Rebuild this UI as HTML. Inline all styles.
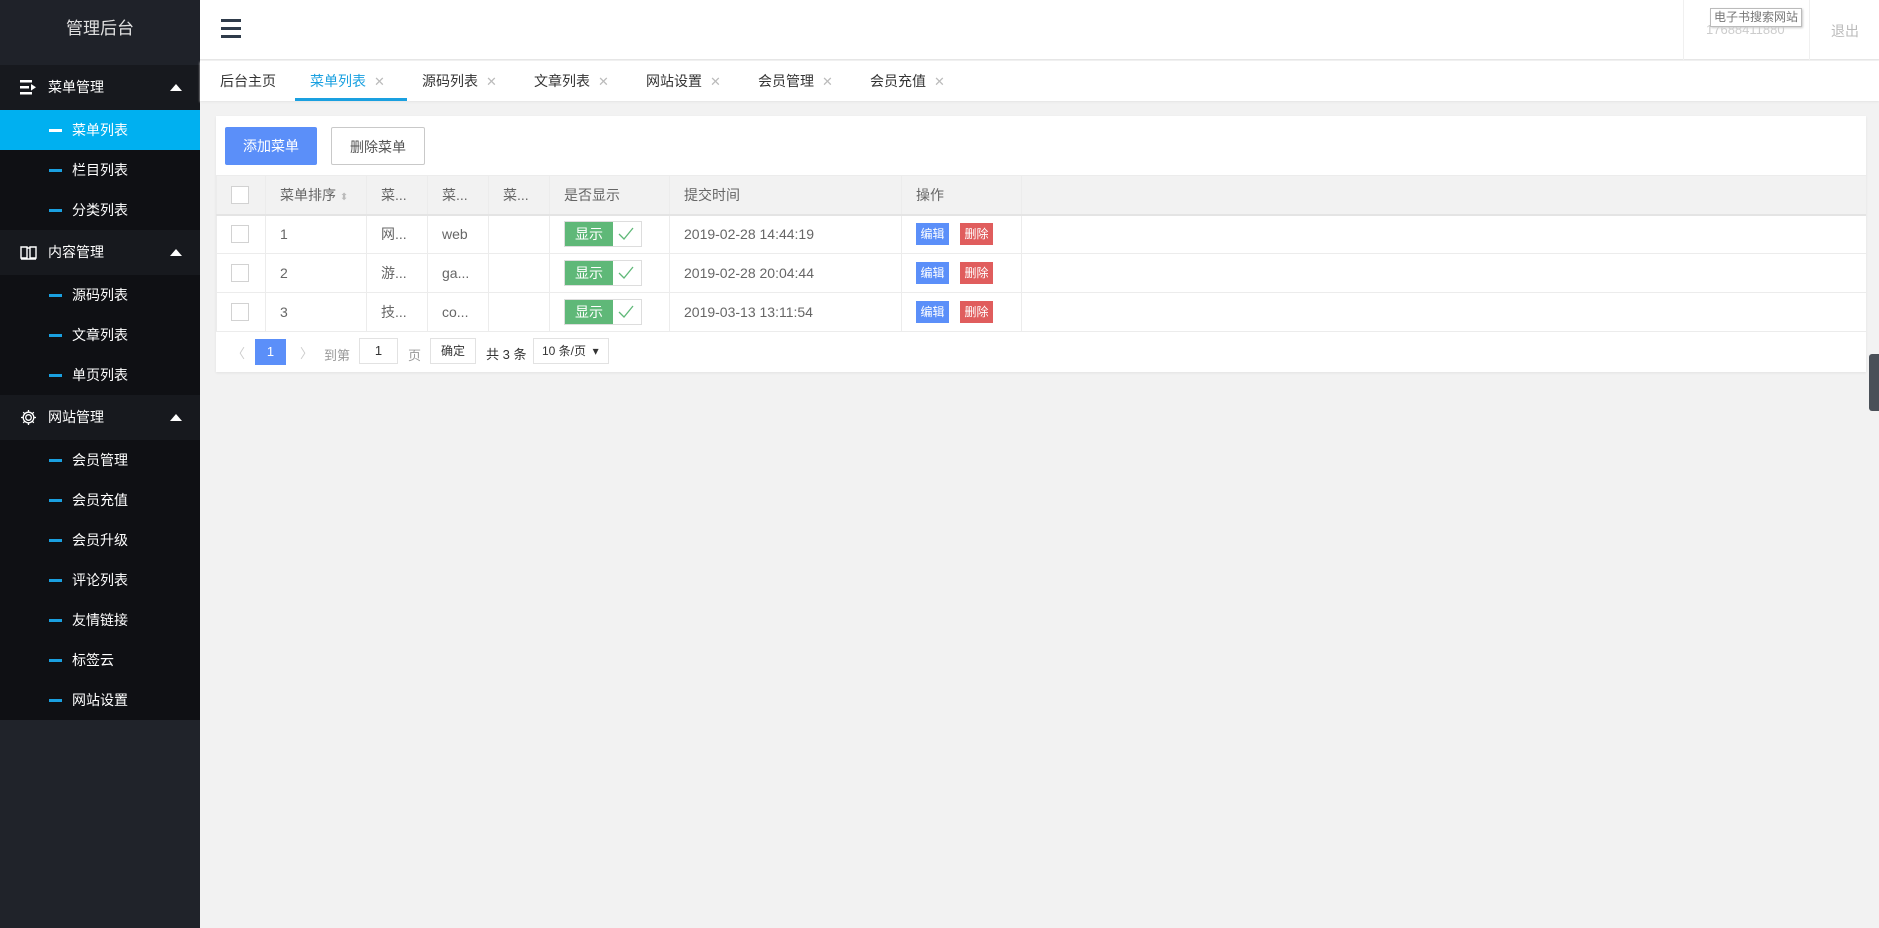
<!DOCTYPE html>
<html><head><meta charset="utf-8"><style>
*{margin:0;padding:0;box-sizing:border-box}
body{width:1879px;height:928px;overflow:hidden;background:#f2f2f2;font-family:"Liberation Sans","Noto Sans CJK SC",sans-serif;position:relative}
.side{position:absolute;left:0;top:0;width:200px;height:928px;background:#20232a}
.title{height:65px;line-height:58px;text-align:center;color:#e0e0e0;font-size:17px;background:#1f2229}
.grp{height:45px;background:#17191e;color:#fff;font-size:14px;position:relative;line-height:45px;padding-left:48px}
.grp .ic{position:absolute;left:20px;top:14px;width:17px;height:17px}
.grp .ar{position:absolute;right:18px;top:19px;width:0;height:0;border-left:6px solid transparent;border-right:6px solid transparent;border-bottom:7px solid #fff}
.it{height:40px;background:#0f1014;color:#fff;font-size:14px;line-height:40px;padding-left:72px;position:relative}
.it:before{content:"";position:absolute;left:49px;top:19px;width:13px;height:3px;background:#1aa0e0}
.it.on{background:#00b0f0}
.it.on:before{background:#fff}
.top{position:absolute;left:200px;top:0;right:0;height:60px;background:#fff;border-bottom:1px solid #e6e6e6}
.tabs{position:absolute;left:200px;top:61px;right:0;height:40px;background:#fff;box-shadow:0 1px 2px #e4e4e4}
.tab{position:absolute;top:0;height:40px;line-height:40px;font-size:14px;color:#333}
.tab .x{color:#bbb;margin-left:8px;font-size:13px}
.card{position:absolute;left:216px;top:116px;width:1650px;height:256px;background:#fff;box-shadow:0 1px 2px #e2e2e2}
.btn{position:absolute;top:11px;height:38px;line-height:38px;font-size:14px;text-align:center}
table{position:absolute;left:0;top:59px;width:1650px;border-collapse:collapse;font-size:14px;color:#666;table-layout:fixed}
td,th{border:1px solid #ececec;height:39px;padding-left:14px;text-align:left;font-weight:normal;white-space:nowrap}
td.e,th.e{border-right:none}
th{background:#f2f2f2;height:39px;color:#666;border-bottom:2px solid #e4e4e4}
.cb{display:inline-block;width:18px;height:18px;border:1px solid #d2d2d2;background:#fff;vertical-align:middle}
.sw{display:inline-block;width:78px;height:26px;border:1px solid #ddd;vertical-align:middle;position:relative}
.sw b{position:absolute;left:0;top:0;width:48px;height:24px;background:#5fb878;color:#fff;font-weight:normal;text-align:center;line-height:24px}
.sw svg{position:absolute;right:7px;top:5px}
.sm{display:inline-block;width:33px;height:22px;line-height:22px;text-align:center;color:#fff;font-size:12px;margin-right:11px;vertical-align:middle}
.pg{position:absolute;font-size:13px;color:#666}
</style></head><body>
<div class="side">
<div class="title">管理后台</div>
<div class="grp"><svg class="ic" viewBox="0 0 17 17" fill="#fff"><rect x="0" y="1" width="12" height="2.5"/><rect x="0" y="7" width="9" height="2.5"/><rect x="0" y="13" width="12" height="2.5"/><path d="M11 5l5 3.3-5 3.3z"/></svg>菜单管理<span class="ar"></span></div>
<div class="it on">菜单列表</div><div class="it">栏目列表</div><div class="it">分类列表</div>
<div class="grp"><svg class="ic" viewBox="0 0 17 17" fill="none" stroke="#fff" stroke-width="1.4"><path d="M1 3h6v11H1zM10 3h6v11h-6zM7 4h3M1 15h15"/></svg>内容管理<span class="ar"></span></div>
<div class="it">源码列表</div><div class="it">文章列表</div><div class="it">单页列表</div>
<div class="grp"><svg class="ic" viewBox="0 0 17 17" fill="none" stroke="#fff" stroke-width="1.3"><circle cx="8.5" cy="8.5" r="2.8"/><path d="M8.5 1v2.2M8.5 13.8V16M1 8.5h2.2M13.8 8.5H16M3.2 3.2l1.6 1.6M12.2 12.2l1.6 1.6M3.2 13.8l1.6-1.6M12.2 4.8l1.6-1.6"/><circle cx="8.5" cy="8.5" r="5.3"/></svg>网站管理<span class="ar"></span></div>
<div class="it">会员管理</div><div class="it">会员充值</div><div class="it">会员升级</div><div class="it">评论列表</div><div class="it">友情链接</div><div class="it">标签云</div><div class="it">网站设置</div>
</div>
<div class="top">
<svg style="position:absolute;left:21px;top:19px" width="20" height="19" viewBox="0 0 20 19" fill="#2f3b4a"><rect y="0" width="20" height="3"/><rect y="8" width="20" height="3"/><rect y="16" width="20" height="3"/></svg>
<div style="position:absolute;left:1483px;top:0;width:1px;height:60px;background:#f0f0f0"></div>
<div style="position:absolute;left:1609px;top:0;width:1px;height:60px;background:#f0f0f0"></div>
<div style="position:absolute;left:1506px;top:22px;font-size:13px;color:#ccc">17688411880</div>
<div style="position:absolute;left:1510px;top:8px;height:19px;padding:0 3px;border:1px solid #bbb;background:#fff;font-size:12px;line-height:17px;color:#777;box-shadow:1px 1px 2px #ccc">电子书搜索网站</div>
<div style="position:absolute;left:1631px;top:21px;font-size:14px;color:#bbb">退出</div>
</div>
<div class="tabs">
<div class="tab" style="left:20px">后台主页</div>
<div class="tab" style="left:110px;color:#1aa0e0">菜单列表<span class="x">✕</span></div>
<div style="position:absolute;left:95px;top:37px;width:112px;height:3px;background:#1aa0e0"></div>
<div class="tab" style="left:222px">源码列表<span class="x">✕</span></div>
<div class="tab" style="left:334px">文章列表<span class="x">✕</span></div>
<div class="tab" style="left:446px">网站设置<span class="x">✕</span></div>
<div class="tab" style="left:558px">会员管理<span class="x">✕</span></div>
<div class="tab" style="left:670px">会员充值<span class="x">✕</span></div>
</div>
<div class="card">
<div class="btn" style="left:9px;width:92px;background:#5b8ff9;color:#fff;border-radius:2px">添加菜单</div>
<div class="btn" style="left:115px;width:94px;border:1px solid #c9c9c9;color:#555;border-radius:2px">删除菜单</div>
<table>
<colgroup><col style="width:49px"><col style="width:101px"><col style="width:61px"><col style="width:61px"><col style="width:61px"><col style="width:120px"><col style="width:232px"><col style="width:120px"><col></colgroup>
<tr><th><span class="cb"></span></th><th>菜单排序 <span style="color:#bbb;font-size:10px">⬍</span></th><th>菜...</th><th>菜...</th><th>菜...</th><th>是否显示</th><th>提交时间</th><th>操作</th><th class="e"></th></tr>
<tr><td><span class="cb"></span></td><td>1</td><td>网...</td><td>web</td><td></td><td><span class="sw"><b>显示</b><svg width="16" height="14" viewBox="0 0 16 14" fill="none" stroke="#5fb878" stroke-width="1.3"><path d="M1 7l5 5L15 1"/></svg></span></td><td>2019-02-28 14:44:19</td><td><span class="sm" style="background:#5b8ff9">编辑</span><span class="sm" style="background:#e05d5d">删除</span></td><td class="e"></td></tr>
<tr><td><span class="cb"></span></td><td>2</td><td>游...</td><td>ga...</td><td></td><td><span class="sw"><b>显示</b><svg width="16" height="14" viewBox="0 0 16 14" fill="none" stroke="#5fb878" stroke-width="1.3"><path d="M1 7l5 5L15 1"/></svg></span></td><td>2019-02-28 20:04:44</td><td><span class="sm" style="background:#5b8ff9">编辑</span><span class="sm" style="background:#e05d5d">删除</span></td><td class="e"></td></tr>
<tr><td><span class="cb"></span></td><td>3</td><td>技...</td><td>co...</td><td></td><td><span class="sw"><b>显示</b><svg width="16" height="14" viewBox="0 0 16 14" fill="none" stroke="#5fb878" stroke-width="1.3"><path d="M1 7l5 5L15 1"/></svg></span></td><td>2019-03-13 13:11:54</td><td><span class="sm" style="background:#5b8ff9">编辑</span><span class="sm" style="background:#e05d5d">删除</span></td><td class="e"></td></tr>
</table>
<div class="pg" style="left:16px;top:227px;color:#ccc">〈</div>
<div class="pg" style="left:39px;top:223px;width:31px;height:26px;background:#5b8ff9;color:#fff;text-align:center;line-height:26px">1</div>
<div class="pg" style="left:84px;top:227px;color:#ccc">〉</div>
<div class="pg" style="left:108px;top:229px;color:#999">到第</div>
<div class="pg" style="left:143px;top:222px;width:39px;height:26px;border:1px solid #e2e2e2;text-align:center;line-height:24px;color:#333">1</div>
<div class="pg" style="left:192px;top:229px;color:#999">页</div>
<div class="pg" style="left:214px;top:222px;width:46px;height:26px;border:1px solid #e2e2e2;text-align:center;line-height:24px;color:#333;font-size:12px">确定</div>
<div class="pg" style="left:270px;top:228px;color:#333">共 3 条</div>
<div class="pg" style="left:317px;top:222px;width:76px;height:26px;border:1px solid #e2e2e2;line-height:24px;padding-left:8px;color:#333;font-size:12px">10 条/页 &nbsp;▾</div>
</div>
<div style="position:absolute;left:1869px;top:354px;width:10px;height:57px;background:#4a5058;border-radius:3px 0 0 3px"></div>
</body></html>
